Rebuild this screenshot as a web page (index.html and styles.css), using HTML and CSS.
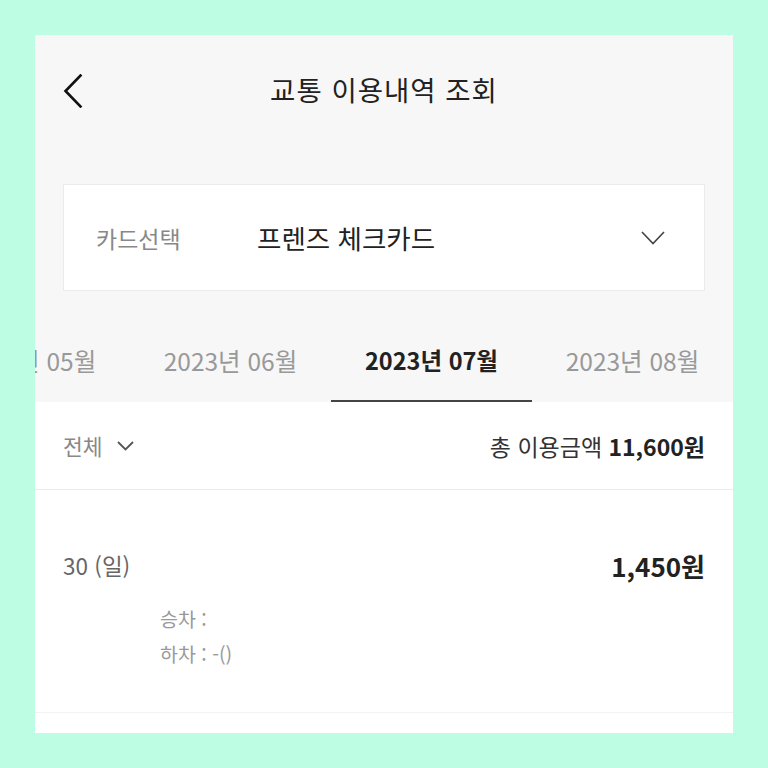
FILE: index.html
```html
<!DOCTYPE html>
<html lang="ko">
<head>
<meta charset="utf-8">
<title>교통 이용내역 조회</title>
<link rel="stylesheet" href="styles.css">
</head>
<body>
<div class="phone">
  <div class="top">
    <header class="header">
      <button class="back" aria-label="뒤로">
        <svg width="20" height="34" viewBox="0 0 20 34"><path d="M17.5 1.5 L2.5 17 L17.5 32.5" fill="none" stroke="#111" stroke-width="2.6" stroke-linecap="square"/></svg>
      </button>
      <h1 class="title">교통 이용내역 조회</h1>
    </header>
    <div class="card-select">
      <span class="card-label">카드선택</span>
      <span class="card-name">프렌즈 체크카드</span>
      <svg class="card-chev" width="24" height="14" viewBox="0 0 24 14"><path d="M1 1 L12 12.5 L23 1" fill="none" stroke="#444" stroke-width="1.6"/></svg>
    </div>
    <nav class="tabs">
      <div class="tab">2023년 05월</div>
      <div class="tab">2023년 06월</div>
      <div class="tab active">2023년 07월</div>
      <div class="tab">2023년 08월</div>
    </nav>
  </div>
  <div class="filter">
    <div class="filter-left">전체
      <svg width="17" height="10" viewBox="0 0 17 10"><path d="M1 1 L8.5 8.5 L16 1" fill="none" stroke="#555" stroke-width="1.8"/></svg>
    </div>
    <div class="total">총 이용금액 <b>11,600원</b></div>
  </div>
  <div class="item">
    <div class="item-head">
      <span class="date">30 (일)</span>
      <span class="amount">1,450원</span>
    </div>
    <div class="item-detail">
      <div>승차 : </div>
      <div>하차 : -()</div>
    </div>
  </div>
</div>
</body>
</html>
```

FILE: styles.css
```css
* { box-sizing: border-box; margin: 0; padding: 0; }
html, body { background: #bdfde3; }
body {
  padding: 35px;
  font-family: "Noto Sans CJK KR", "Noto Sans", sans-serif;
}
.phone {
  width: 698px;
  height: 698px;
  background: #fff;
  overflow: hidden;
}
.top { background: #f7f7f7; }
.header {
  height: 108px;
  display: flex;
  align-items: center;
  justify-content: center;
  position: relative;
}
.back {
  position: absolute;
  left: 28px;
  top: 39px;
  background: none;
  border: 0;
  display: flex;
}
.title {
  font-size: 27.5px;
  font-weight: 400;
  color: #222;
  letter-spacing: 1px;
}
.card-select {
  margin: 41px 28px 0;
  height: 107px;
  background: #fff;
  border: 1px solid #ebebeb;
  display: flex;
  align-items: center;
  padding: 0 39px 0 32px;
}
.card-label {
  font-size: 23px;
  color: #888;
  width: 161px;
}
.card-name {
  font-size: 26.5px;
  color: #222;
  flex: 1;
}
.tabs {
  display: flex;
  padding-top: 29px;
  margin-left: -106px;
}
.tab {
  flex: 0 0 201px;
  height: 82px;
  display: flex;
  align-items: center;
  justify-content: center;
  font-size: 24.5px;
  color: #999;
  border-bottom: 2px solid transparent;
}
.tab.active {
  color: #222;
  font-weight: 700;
  font-size: 23.5px;
  border-bottom-color: #444;
}
.filter {
  height: 88px;
  display: flex;
  align-items: center;
  justify-content: space-between;
  padding: 0 28px;
  border-bottom: 1px solid #ececec;
}
.filter-left {
  font-size: 21.5px;
  color: #888;
  display: flex;
  align-items: center;
  gap: 14px;
}
.total {
  font-size: 23px;
  color: #333;
}
.total b { font-weight: 700; color: #222; }
.item {
  height: 223px;
  padding: 55px 28px 0;
  border-bottom: 1px solid #f3f3f3;
}
.item-head {
  display: flex;
  justify-content: space-between;
  align-items: center;
  height: 40px;
}
.date { font-size: 22.5px; color: #666; }
.amount { font-size: 26px; font-weight: 700; color: #222; }
.item-detail {
  padding: 16px 0 0 97px;
  font-size: 19.5px;
  color: #999;
  line-height: 35px;
}
```
